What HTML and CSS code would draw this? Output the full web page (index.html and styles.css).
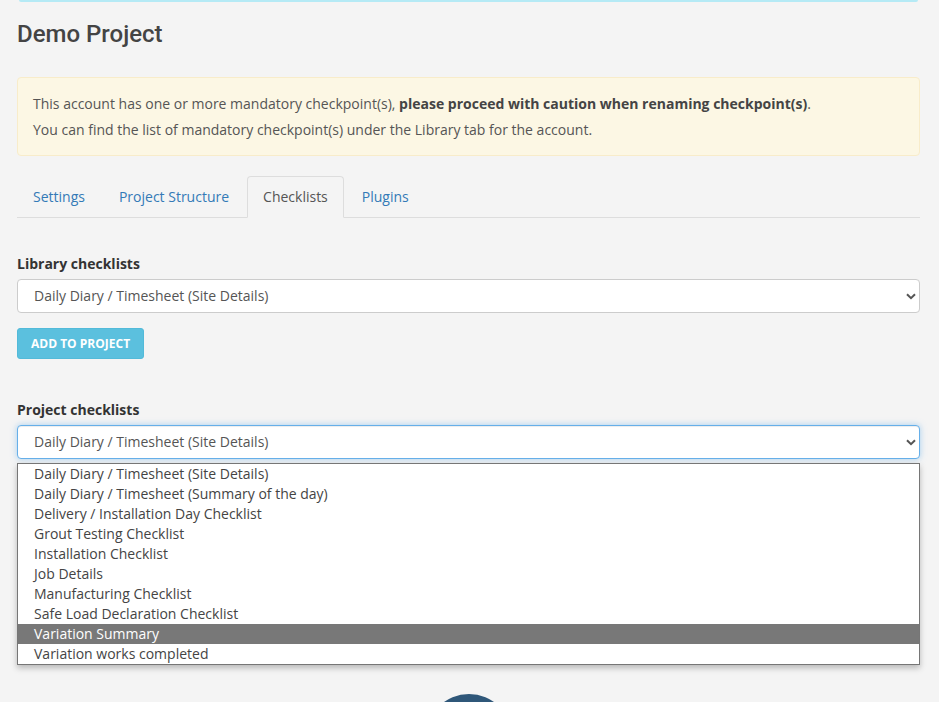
FILE: index.html
```html
<!DOCTYPE html>
<html>
<head>
<meta charset="utf-8">
<link rel="stylesheet" href="styles.css">
</head>
<body>
<div class="topline"></div>
<main class="page">
  <h1 class="title">Demo Project</h1>
  <div class="alert">
    <p>This account has one or more mandatory checkpoint(s), <strong>please proceed with caution when renaming checkpoint(s)</strong>.</p>
    <p>You can find the list of mandatory checkpoint(s) under the Library tab for the account.</p>
  </div>
  <ul class="tabs">
    <li class="tab"><a>Settings</a></li>
    <li class="tab"><a>Project Structure</a></li>
    <li class="tab active"><a>Checklists</a></li>
    <li class="tab"><a>Plugins</a></li>
  </ul>

  <section class="group library">
    <label class="label">Library checklists</label>
    <div class="select">
      <span>Daily Diary / Timesheet (Site Details)</span>
      <svg class="chev" width="10" height="7" viewBox="0 0 10 7"><path d="M1 1.2 L5 5.2 L9 1.2" fill="none" stroke="#555" stroke-width="2"/></svg>
    </div>
    <button class="btn">ADD TO PROJECT</button>
  </section>

  <section class="group project">
    <label class="label">Project checklists</label>
    <div class="select-wrap">
      <div class="select focus">
        <span>Daily Diary / Timesheet (Site Details)</span>
        <svg class="chev" width="10" height="7" viewBox="0 0 10 7"><path d="M1 1.2 L5 5.2 L9 1.2" fill="none" stroke="#555" stroke-width="2"/></svg>
      </div>
      <ul class="dropdown">
        <li>Daily Diary / Timesheet (Site Details)</li>
        <li>Daily Diary / Timesheet (Summary of the day)</li>
        <li>Delivery / Installation Day Checklist</li>
        <li>Grout Testing Checklist</li>
        <li>Installation Checklist</li>
        <li>Job Details</li>
        <li>Manufacturing Checklist</li>
        <li>Safe Load Declaration Checklist</li>
        <li class="hl">Variation Summary</li>
        <li>Variation works completed</li>
      </ul>
    </div>
  </section>

  <div class="footer">
    <div class="circle"></div>
  </div>
</main>
</body>
</html>
```

FILE: styles.css
```css
* { box-sizing: border-box; }
html, body { margin: 0; padding: 0; }
body {
  background: #f4f4f4;
  font-family: "Open Sans", "Liberation Sans", sans-serif;
  font-size: 14px;
  line-height: 20px;
  color: #555;
  height: 702px;
  overflow: hidden;
}
.topline {
  height: 2px;
  margin: 0 21px 0 19px;
  background: #b5eaf5;
  border-radius: 0 0 2px 2px;
}
.page {
  padding: 0 19px 0 17px;
}
.title {
  margin: 17px 0 0;
  font-family: Roboto, "Liberation Sans", sans-serif;
  font-weight: 500;
  font-size: 24px;
  line-height: 30px;
  color: #444;
}
.alert {
  margin-top: 28px;
  background: #fcf7e4;
  border: 1px solid #f8ecca;
  border-radius: 4px;
  padding: 16px 15px 15px 15px;
  color: #555;
}
.alert p { margin: 0; }
.alert p + p { margin-top: 6px; }
.alert strong { color: #444; font-weight: 700; }

.tabs {
  list-style: none;
  margin: 20px 0 0;
  padding: 0;
  display: flex;
  border-bottom: 1px solid #ddd;
}
.tab {
  margin-right: 2px;
  margin-bottom: -1px;
}
.tab a {
  display: block;
  padding: 10px 15px;
  border: 1px solid transparent;
  border-radius: 4px 4px 0 0;
  color: #337ab7;
}
.tab.active a {
  border-color: #ddd;
  border-bottom-color: #f4f4f4;
  background: #f4f4f4;
  color: #555;
}

.group { display: flex; flex-direction: column; align-items: flex-start; }
.library { margin-top: 36px; }
.project { margin-top: 41px; }
.label {
  font-weight: 700;
  color: #333;
  margin-bottom: 5px;
}
.select {
  width: 100%;
  height: 34px;
  background: #fff;
  border: 1px solid #ccc;
  border-radius: 4px;
  display: flex;
  align-items: center;
  justify-content: space-between;
  padding: 0 3px 0 16px;
  color: #555;
}
.select .chev { margin-top: 1px; }
.select.focus {
  border-color: #66afe9;
  box-shadow: inset 0 1px 1px rgba(0,0,0,.075), 0 0 6px rgba(102,175,233,.55);
}
.btn {
  margin-top: 15px;
  height: 31px;
  padding: 0 13px;
  background: #5bc0de;
  border: 1px solid #52bad9;
  border-radius: 3px;
  color: #fff;
  font-family: "Open Sans", "Liberation Sans", sans-serif;
  font-size: 12px;
  font-weight: 700;
  line-height: 18px;
}
.select-wrap { position: relative; width: 100%; }
.dropdown {
  position: absolute;
  left: 0;
  right: 0;
  top: calc(100% + 4px);
  margin: 0;
  padding: 0;
  list-style: none;
  background: #fff;
  border: 1px solid #767676;
  box-shadow: 0 3px 6px rgba(0,0,0,.25);
  z-index: 5;
}
.dropdown li {
  height: 20px;
  line-height: 20px;
  padding-left: 16px;
  color: #444;
  white-space: nowrap;
}
.dropdown li.hl {
  background: #787878;
  color: #fff;
}
.footer {
  margin-top: 235px;
  display: flex;
  justify-content: center;
}
.circle {
  width: 86px;
  height: 86px;
  border-radius: 50%;
  background: #2f5779;
  margin-left: 1px;
}
```
